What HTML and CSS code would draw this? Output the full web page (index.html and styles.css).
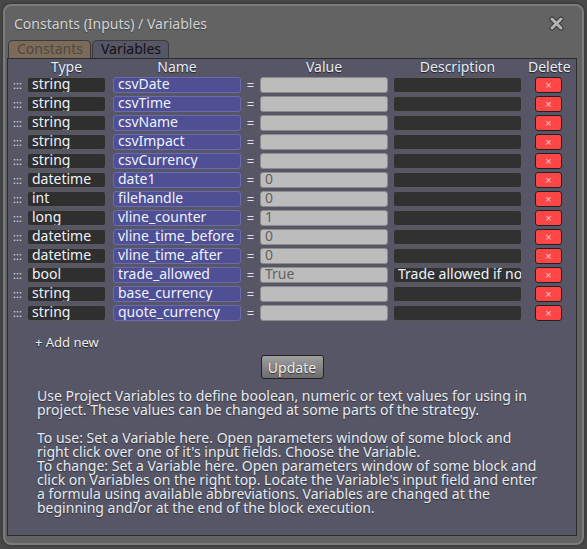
FILE: index.html
```html
<!DOCTYPE html>
<html lang="en">
<head>
  <meta charset="UTF-8" />
  <title>Constants (Inputs) / Variables</title>
  <link rel="stylesheet" href="styles.css">
</head>
<body>

  <div class="window">
    <div class="titlebar">
      <span class="title">Constants (Inputs) / Variables</span>
      <svg class="close" width="15" height="15" viewBox="0 0 15 15">
        <path d="M3 3 L12 12 M12 3 L3 12" stroke="#3a3a3a" stroke-width="5" stroke-linecap="round"/>
        <path d="M3 3 L12 12 M12 3 L3 12" stroke="#b4b4b4" stroke-width="3" stroke-linecap="round"/>
      </svg>
    </div>

    <div class="tabs">
      <div class="tab tab-off">Constants</div>
      <div class="tab tab-on">Variables</div>
    </div>

    <div class="panel">
      <div class="row head">
        <div class="handle"></div>
        <div class="c-type">Type</div>
        <div class="c-name">Name</div>
        <div class="c-eq"></div>
        <div class="c-value">Value</div>
        <div class="c-desc">Description</div>
        <div class="c-del">Delete</div>
      </div>
      <div id="var-list"></div>

      <div class="add-new">+ Add new</div>
      <div class="update-wrap"><button class="update-btn">Update</button></div>

      <p class="help">Use Project Variables to define boolean, numeric or text values for using in project. These values can be changed at some parts of the strategy.<br><br>To use: Set a Variable here. Open parameters window of some block and right click over one of it's input fields. Choose the Variable.<br>To change: Set a Variable here. Open parameters window of some block and click on Variables on the right top. Locate the Variable's input field and enter a formula using available abbreviations. Variables are changed at the beginning and/or at the end of the block execution.</p>
    </div>
  </div>

  <script>
    const vars = [
      { type: "string", name: "csvDate", value: "", desc: "" },
      { type: "string", name: "csvTime", value: "", desc: "" },
      { type: "string", name: "csvName", value: "", desc: "" },
      { type: "string", name: "csvImpact", value: "", desc: "" },
      { type: "string", name: "csvCurrency", value: "", desc: "" },
      { type: "datetime", name: "date1", value: "0", desc: "" },
      { type: "int", name: "filehandle", value: "0", desc: "" },
      { type: "long", name: "vline_counter", value: "1", desc: "" },
      { type: "datetime", name: "vline_time_before", value: "0", desc: "" },
      { type: "datetime", name: "vline_time_after", value: "0", desc: "" },
      { type: "bool", name: "trade_allowed", value: "True", desc: "Trade allowed if no news" },
      { type: "string", name: "base_currency", value: "", desc: "" },
      { type: "string", name: "quote_currency", value: "", desc: "" }
    ];

    const list = document.getElementById("var-list");
    vars.forEach(v => {
      const row = document.createElement("div");
      row.className = "row";
      row.innerHTML = `
        <div class="handle">:::</div>
        <div class="field c-type in-type">${v.type}</div>
        <div class="field c-name in-name">${v.name}</div>
        <div class="c-eq">=</div>
        <div class="field c-value in-value">${v.value}</div>
        <div class="field c-desc in-desc">${v.desc}</div>
        <button class="c-del del-btn">&times;</button>
      `;
      list.appendChild(row);
    });
  </script>

</body>
</html>
```

FILE: styles.css
```css
body {
  margin: 0;
  background-color: #484848;
  font-family: "Noto Sans", "Open Sans", sans-serif;
}
.window {
  box-sizing: border-box;
  width: 581px;
  height: 541px;
  margin: 4px 3px;
  background-color: #636363;
  border: 2px solid #7c7c7c;
  border-radius: 8px;
  box-shadow: 0 0 3px #2a2a2a;
  display: flex;
  flex-direction: column;
}
.titlebar {
  height: 34px;
  display: flex;
  align-items: center;
  justify-content: space-between;
  padding: 0 18px 0 9px;
}
.title {
  color: #d2d2d2;
  font-size: 14px;
  text-shadow: 0 1px 1px #444;
}
.tabs {
  display: flex;
  padding-left: 3px;
  height: 18px;
  align-items: flex-end;
}
.tab {
  box-sizing: border-box;
  height: 18px;
  font-size: 14px;
  line-height: 16px;
  padding: 0 8px;
  border-radius: 5px 5px 0 0;
  border: 1px solid #3a3a3a;
  border-bottom: none;
}
.tab-off {
  background-color: #7d6b5a;
  color: #4c4842;
  width: 83px;
  margin-right: 1px;
}
.tab-on {
  background-color: #565667;
  color: #111;
  width: 77px;
}
.panel {
  flex: 1;
  margin: 0 5px 7px 2px;
  background-color: #565667;
  border: 1px solid #2c2c2c;
}
.row {
  display: flex;
  align-items: center;
  height: 19px;
}
.head {
  height: 16px;
  color: #e4ecf6;
  font-size: 14px;
  text-shadow: 0 1px 1px #222;
}
.head div {
  text-align: center;
  line-height: 16px;
}
.handle {
  width: 19px;
  color: #e0e0e0;
  font-size: 11px;
  text-align: center;
}
.c-type { width: 79px; }
.c-name { width: 128px; margin-left: 7px; }
.c-eq {
  width: 19px;
  text-align: center;
  color: #e0e0e0;
  font-size: 13px;
}
.c-value { width: 128px; }
.c-desc { width: 129px; margin-left: 5px; }
.c-del { width: 27px; margin-left: 13px; }
.head .c-del { width: 41px; margin-left: 6px; }

.field {
  box-sizing: border-box;
  height: 16px;
  padding: 0 4px;
  border: 1px solid #5a5a5a;
  border-radius: 3px;
  font-size: 14px;
  line-height: 11px;
  color: #eef2fa;
  white-space: nowrap;
  overflow: hidden;
}
.in-type {
  background-color: #2f2f2f;
}
.in-name {
  background-color: #4f4f95;
  border-color: #6b6bab;
}
.in-value {
  background-color: #bcbcbc;
  border-color: #8c8c8c;
  color: #626262;
}
.in-desc {
  background-color: #313131;
}
.del-btn {
  box-sizing: border-box;
  height: 16px;
  padding: 0;
  background-color: #ff4646;
  border: 1px solid #222;
  border-radius: 3px;
  color: #f4d0d0;
  font-size: 11px;
  line-height: 12px;
}
.add-new {
  margin: 12px 0 0 27px;
  color: #eee;
  font-size: 13px;
  line-height: 16px;
  text-shadow: 0 1px 1px #222;
}
.update-wrap {
  display: flex;
  justify-content: center;
  margin-top: 5px;
}
.update-btn {
  width: 63px;
  height: 24px;
  padding: 0;
  border: 1px solid #222;
  border-radius: 3px;
  background: linear-gradient(#a0a0a0, #6c6c6c);
  color: #eee;
  font-family: "Noto Sans", "Open Sans", sans-serif;
  font-size: 14px;
  text-shadow: 0 1px 1px #333;
}
.help {
  margin: 10px 30px 0 29px;
  color: #e6eaf2;
  font-size: 14px;
  line-height: 14px;
  text-shadow: 0 1px 1px #333;
}
```
